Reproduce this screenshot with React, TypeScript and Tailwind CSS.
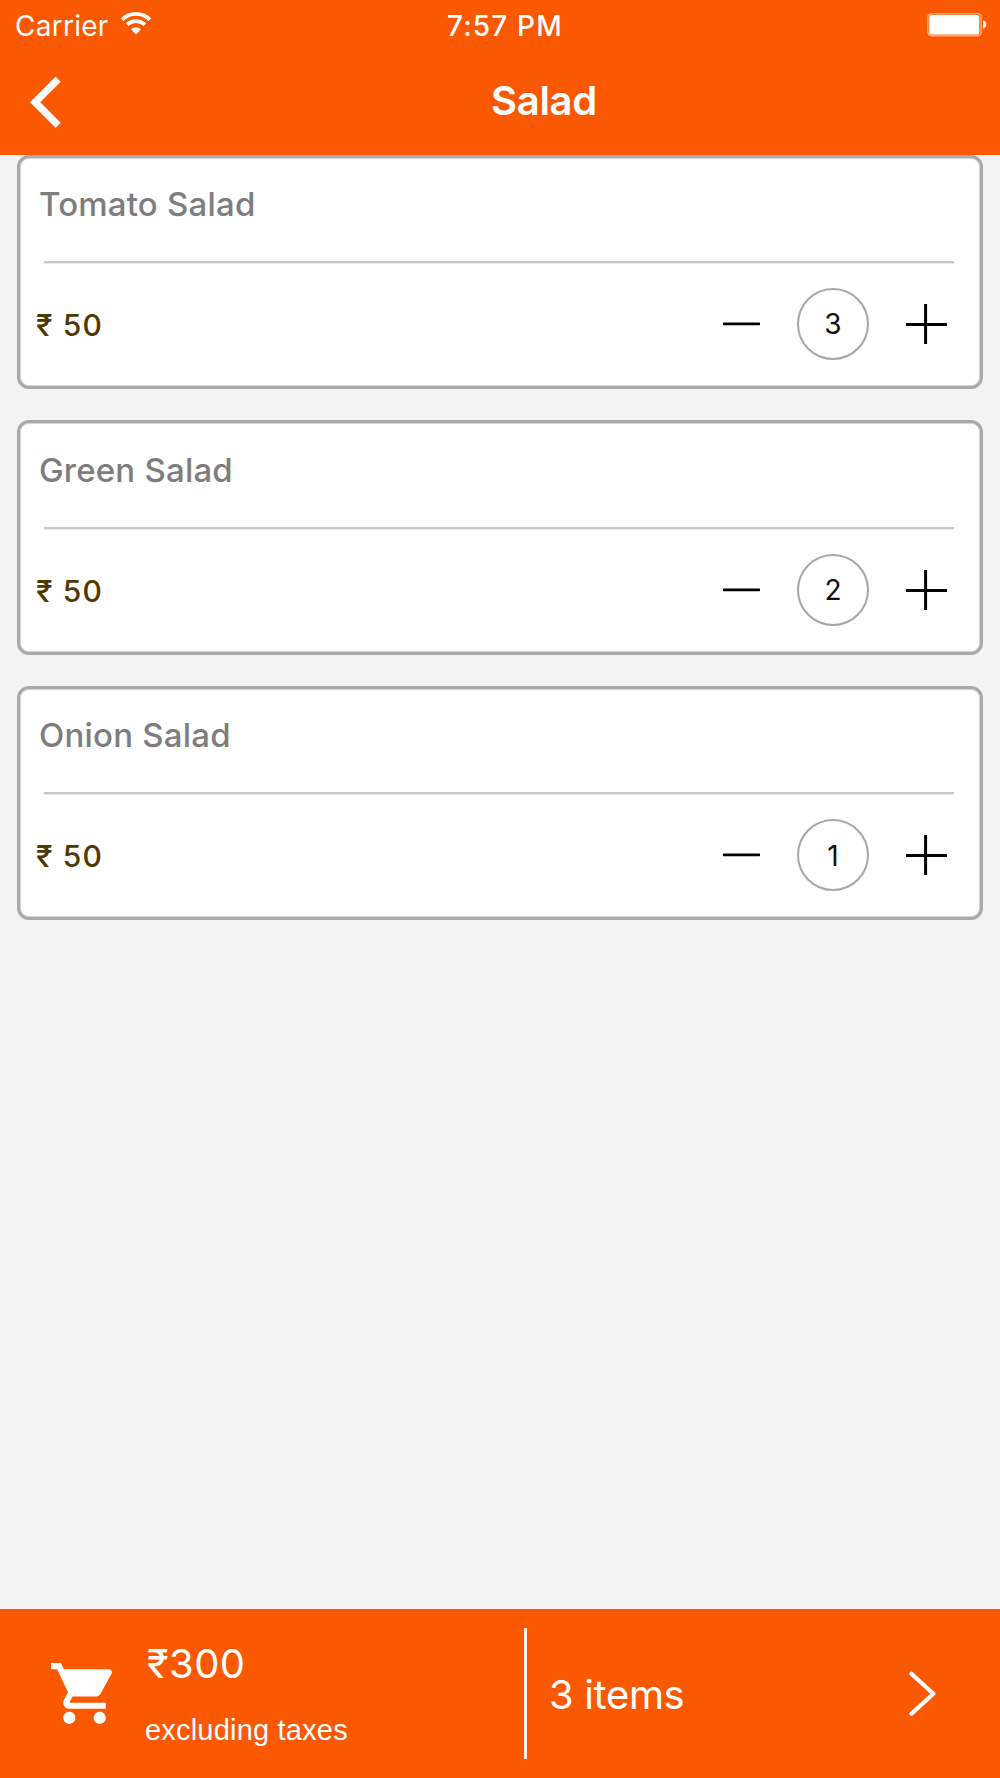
import React, { useState } from "react";

type Item = { name: string; price: number; qty: number };

const ITEMS: Item[] = [
  { name: "Tomato Salad", price: 50, qty: 3 },
  { name: "Green Salad", price: 50, qty: 2 },
  { name: "Onion Salad", price: 50, qty: 1 },
];

function WifiIcon() {
  return (
    <svg className="ml-[11px] h-[24px] w-[32px] shrink-0 overflow-visible" viewBox="0 0 32 24" fill="none" stroke="white">
      <path d="M2.1 6.7 A19.7 19.7 0 0 1 29.9 6.7" strokeWidth="3.8" />
      <path d="M7.1 11.7 A12.8 12.8 0 0 1 24.9 11.7" strokeWidth="3.8" />
      <path d="M16 21.5 L11 16.3 A7.3 7.3 0 0 1 21 16.3 Z" fill="white" stroke="none" />
    </svg>
  );
}

function BatteryIcon() {
  return (
    <svg className="h-[24px] w-[60px] shrink-0" viewBox="0 0 60 24">
      <rect x="0.8" y="0.8" width="53.4" height="21.8" rx="3.8" fill="none" stroke="white" strokeOpacity="0.5" strokeWidth="1.6" />
      <rect x="2.3" y="2" width="50" height="19.4" rx="2.2" fill="white" />
      <path d="M56 7.6 Q59.2 8.2 59.2 11.6 Q59.2 15 56 15.6 Z" fill="white" />
    </svg>
  );
}

function StatusBar() {
  return (
    <div className="grid h-[50px] grid-cols-[447px_1fr_auto] items-center pr-[13px]">
      <div className="flex items-center pl-[15px]">
        <span className="pt-[2px] text-[28px] leading-none tracking-[0.25px]">Carrier</span>
        <WifiIcon />
      </div>
      <span className="pt-[2px] text-[28px] leading-none font-medium tracking-[1.15px]">7:57 PM</span>
      <BatteryIcon />
    </div>
  );
}

function NavBar({ title }: { title: string }) {
  return (
    <div className="flex h-[104px] items-center">
      <button className="w-[88px] pl-[30px]" aria-label="Back">
        <svg className="h-[51px] w-[31px]" viewBox="0 0 31 51" fill="white">
          <path d="M0 25.2 L25.6 -0.3 L30.7 4.7 L10.3 25.2 L30.7 45.7 L25.6 50.7 Z" />
        </svg>
      </button>
      <h1 className="flex-1 pb-[2px] text-center text-[40px] leading-none font-semibold tracking-[-0.3px]">{title}</h1>
    </div>
  );
}

function ItemCard({ item, onChange }: { item: Item; onChange: (delta: number) => void }) {
  return (
    <section className="flex h-[234.3px] shrink-0 flex-col rounded-[12px] border-[3px] border-[#a9a9a9] bg-white shadow-[inset_0_0_0_1px_#d6d6d6]">
      <h2 className="flex h-[93.6px] items-center pl-[19px] text-[33px] leading-none font-medium tracking-[0.2px] text-[#7d7d7d]">
        {item.name}
      </h2>
      <div className="mt-[9.7px] mr-[26px] ml-[24px] h-[2px] shrink-0 bg-[#c8c8c8] shadow-[0_1px_0_#ebebeb]" />
      <div className="flex flex-1 items-center justify-between pr-[33px] pl-[16px]">
        <span className="pt-[1px] text-[30px] leading-none font-medium tracking-[1.1px] text-[#4f3700]">₹ {item.price}</span>
        <div className="flex items-center gap-[37px] pb-[1px] text-[#111]">
          <button onClick={() => onChange(-1)} aria-label="Remove one">
            <svg className="h-[40px] w-[37px]" viewBox="0 0 37 40">
              <rect x="0" y="18.4" width="37" height="2.8" rx="0.6" fill="black" />
            </svg>
          </button>
          <span className="flex size-[72px] items-center justify-center rounded-full border-2 border-[#a6a6a6] pt-[1px] text-[28px] leading-none">
            {item.qty}
          </span>
          <button onClick={() => onChange(1)} aria-label="Add one">
            <svg className="h-[40px] w-[41px]" viewBox="0 0 41 40">
              <path d="M0 20.4 H41 M19.6 0 V40" stroke="black" strokeWidth="3" />
            </svg>
          </button>
        </div>
      </div>
    </section>
  );
}

function CartFooter({ total, count }: { total: number; count: number }) {
  return (
    <footer className="flex h-[169px] shrink-0 items-center bg-[#fb5802] text-white">
      <svg className="ml-[48px] size-[73px] shrink-0" viewBox="0 0 24 24" fill="white">
        <path d="M7 18c-1.1 0-1.99.9-1.99 2S5.9 22 7 22s2-.9 2-2-.9-2-2-2zM1 2v2h2l3.6 7.59-1.35 2.45c-.16.28-.25.61-.25.96 0 1.1.9 2 2 2h12v-2H7.42c-.14 0-.25-.11-.25-.25l.03-.12.9-1.63h7.45c.75 0 1.41-.41 1.75-1.03l3.58-6.49c.08-.14.12-.31.12-.48 0-.55-.45-1-1-1H5.21l-.94-2H1zm16 16c-1.1 0-1.99.9-1.99 2s.89 2 1.99 2 2-.9 2-2-.9-2-2-2z" />
      </svg>
      <div className="ml-[24px] flex h-full w-[379px] flex-col pt-[21px]">
        <span className="flex h-[68px] items-center pl-[2px] text-[40px] leading-none tracking-[0.4px]">₹{total}</span>
        <span className="flex h-[65px] items-center font-['Liberation_Sans',sans-serif] text-[29px] leading-none tracking-[0.2px]">
          excluding taxes
        </span>
      </div>
      <div className="h-[131px] w-[3px] bg-[#fff0e8]" />
      <span className="ml-[22px] flex-1 pt-[2px] text-[40px] leading-none tracking-[-0.35px]">{count} items</span>
      <button className="mr-[64.5px]" aria-label="Open cart">
        <svg className="h-[46px] w-[27px]" viewBox="0 0 27 46" fill="none" stroke="white" strokeWidth="4.2" strokeLinecap="round" strokeLinejoin="round">
          <path d="M2.5 2.7 L24.3 22.7 L2.5 42.7" />
        </svg>
      </button>
    </footer>
  );
}

export default function App() {
  const [items, setItems] = useState(ITEMS);
  const change = (index: number, delta: number) =>
    setItems((list) => list.map((it, i) => (i === index ? { ...it, qty: Math.max(0, it.qty + delta) } : it)));
  const total = items.reduce((sum, it) => sum + it.price * it.qty, 0);
  const count = items.filter((it) => it.qty > 0).length;

  return (
    <div className="flex h-[1778px] w-[1000px] flex-col overflow-hidden bg-[#f3f3f3] font-[Inter,sans-serif]">
      <header className="h-[154.67px] shrink-0 bg-[#fb5802] text-white">
        <StatusBar />
        <NavBar title="Salad" />
      </header>
      <main className="flex flex-1 flex-col gap-[31.4px] px-[17px]">
        {items.map((item, i) => (
          <ItemCard key={item.name} item={item} onChange={(d) => change(i, d)} />
        ))}
      </main>
      <CartFooter total={total} count={count} />
    </div>
  );
}
